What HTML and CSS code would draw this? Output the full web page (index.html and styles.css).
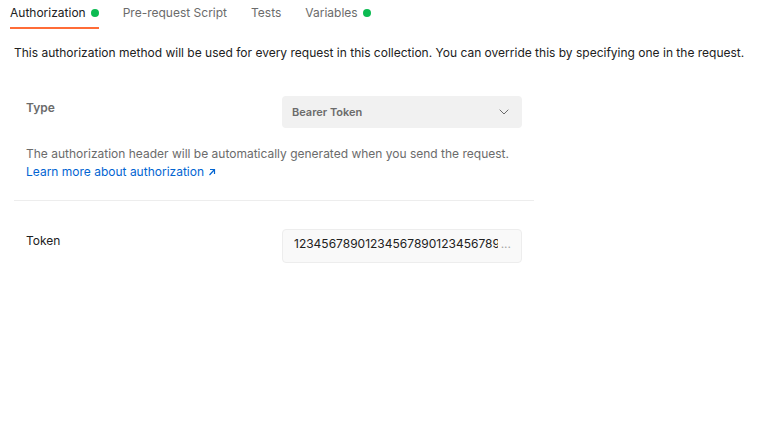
FILE: index.html
```html
<!DOCTYPE html>
<html lang="en">
<head>
  <meta charset="utf-8">
  <meta name="viewport" content="width=device-width, initial-scale=1">
  <title>Authorization</title>
  <link rel="stylesheet" href="styles.css">
</head>
<body>
  <nav class="tabs" role="tablist">
    <button class="tab tab-active" type="button" role="tab" aria-selected="true">Authorization<span class="dot"></span></button>
    <button class="tab" type="button" role="tab" aria-selected="false">Pre-request Script</button>
    <button class="tab" type="button" role="tab" aria-selected="false">Tests</button>
    <button class="tab" type="button" role="tab" aria-selected="false">Variables<span class="dot"></span></button>
  </nav>
  <main class="panel">
    <p class="intro">This authorization method will be used for every request in this collection. You can override this by specifying one in the request.</p>
    <form class="auth">
      <section class="type-section">
        <div class="field">
          <label class="label-strong" for="type">Type</label>
          <div class="select-box">
            <select class="select" id="type">
              <option>Bearer Token</option>
            </select>
            <svg class="chevron" viewBox="0 0 16 16" aria-hidden="true"><path d="M3.700 5.700 8 10l4.300-4.300"/></svg>
          </div>
        </div>
        <p class="help">The authorization header will be automatically generated when you send the request.<br>
          <a class="link" href="#">Learn more about authorization<svg class="arrow" viewBox="0 0 8 8" aria-hidden="true"><path d="M2 1.500h4.500V6M6.500 1.500l-5 5.500"/></svg></a></p>
      </section>
      <section class="token-section">
        <div class="field">
          <label class="label" for="token">Token</label>
          <div class="token-box">
            <input class="token" id="token" type="text" value="123456789012345678901234567890">
            <span class="more">...</span>
          </div>
        </div>
      </section>
    </form>
  </main>
</body>
</html>
```
FILE: styles.css
```css
* {
  box-sizing: border-box;
}

body {
  margin: 0;
  background: #fff;
  color: #212121;
  font: 12px/18px Inter, "Liberation Sans", sans-serif;
}

p {
  margin: 0;
}

.tabs {
  display: flex;
  gap: 24px;
  padding: 0 10px;
}

.tab {
  display: flex;
  align-items: center;
  gap: 5px;
  padding: 4px 0 5px;
  border: 0;
  border-bottom: 2px solid transparent;
  background: none;
  color: #6b6b6b;
  font: inherit;
}

.tab-active {
  border-bottom-color: #ff6c37;
  color: #212121;
}

.dot {
  width: 8px;
  height: 8px;
  border-radius: 50%;
  background: #0cbb52;
}

.panel {
  padding: 15px 14px;
}

.auth {
  max-width: 520px;
  margin-top: 34px;
}

.type-section {
  padding: 0 12px 19px;
  border-bottom: 1px solid #ededed;
}

.token-section {
  padding: 28px 12px;
}

.field {
  display: grid;
  grid-template-columns: 1fr 240px;
}

.label,
.label-strong {
  padding-top: 3px;
}

.label-strong {
  color: #6b6b6b;
  font-weight: 600;
}

.select-box {
  display: grid;
  align-items: center;
}

.select,
.chevron {
  grid-area: 1 / 1;
}

.select {
  appearance: none;
  width: 100%;
  height: 32px;
  padding: 0 32px 0 10px;
  border: 0;
  border-radius: 4px;
  background: #f1f1f1;
  color: #6b6b6b;
  font: 600 11px/16px Inter, "Liberation Sans", sans-serif;
}

.chevron {
  justify-self: end;
  width: 16px;
  height: 16px;
  margin-right: 10px;
  fill: none;
  stroke: #6b6b6b;
  pointer-events: none;
}

.help {
  margin-top: 17px;
  color: #6b6b6b;
}

.link {
  color: #0265d2;
  text-decoration: none;
}

.arrow {
  width: 8px;
  height: 8px;
  margin-left: 4px;
  fill: none;
  stroke: currentColor;
  stroke-width: 1.2;
}

.token-box {
  display: flex;
  align-items: flex-start;
  gap: 3px;
  height: 34px;
  padding: 5px 10px 0 11px;
  border: 1px solid #ededed;
  border-radius: 4px;
  background: #f9f9f9;
}

.token {
  flex: 1;
  min-width: 0;
  height: 18px;
  padding: 0;
  border: 0;
  background: none;
  color: #212121;
  font: inherit;
}

.more {
  color: #a6a6a6;
}
```
